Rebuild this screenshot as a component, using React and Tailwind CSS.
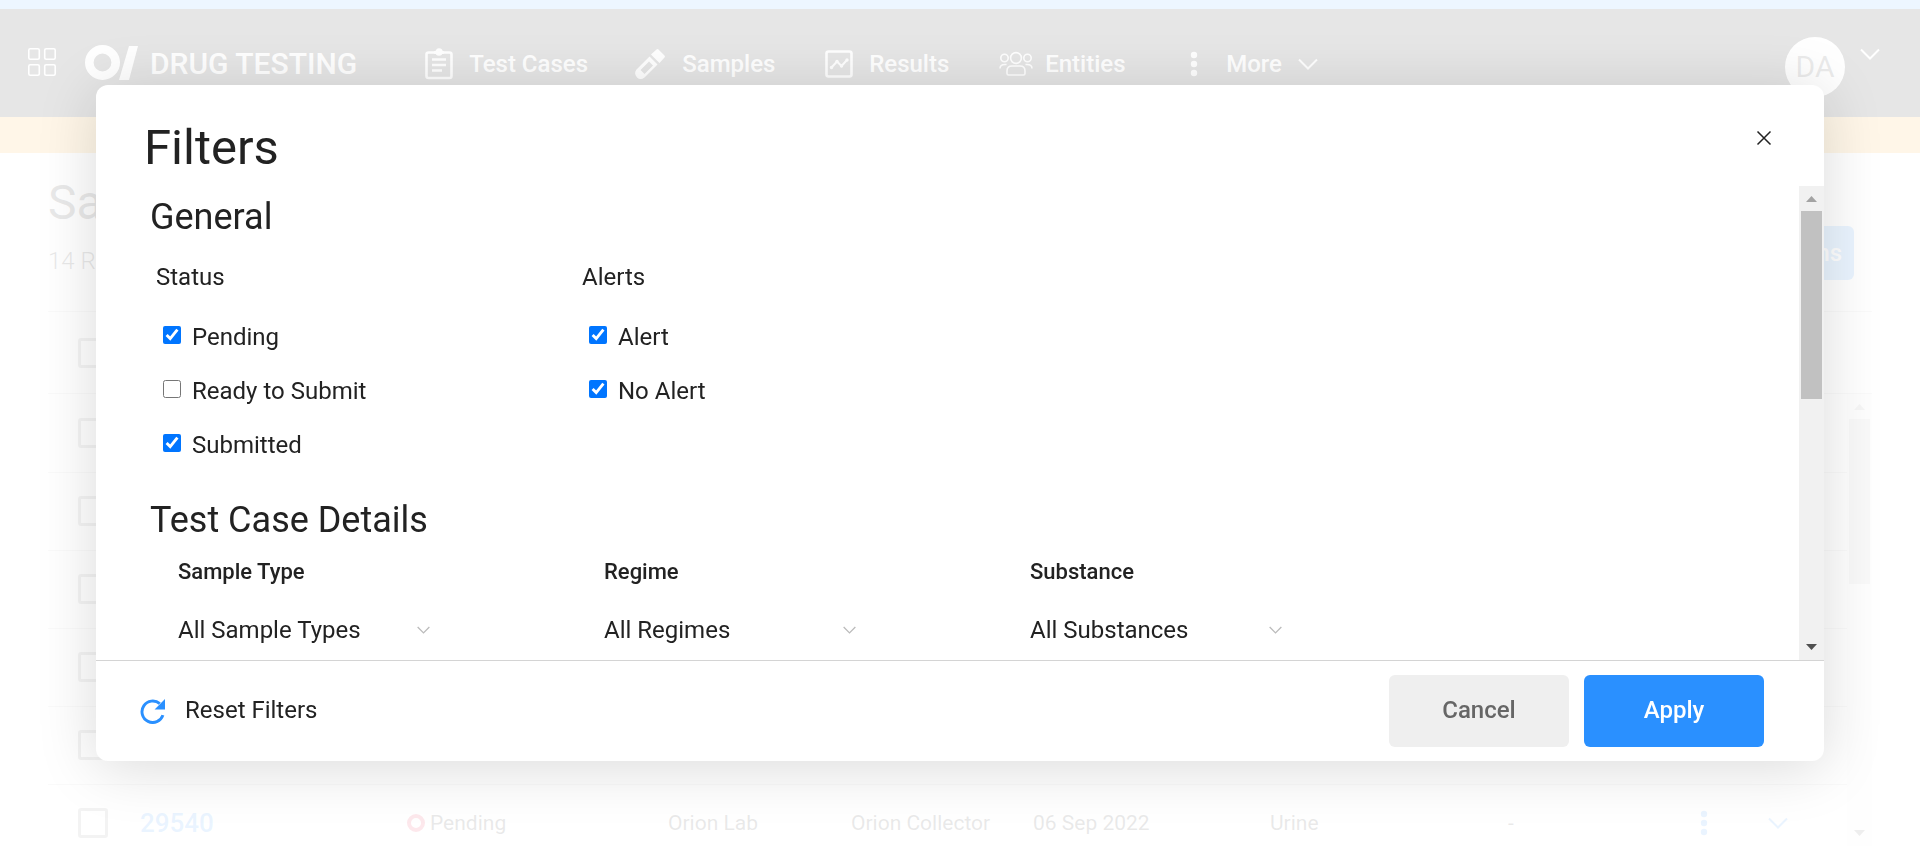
import React from "react";

function Chevron({ className }) {
  return (
    <svg viewBox="0 0 20 12" className={className} fill="none" stroke="currentColor" strokeWidth="2" aria-hidden="true">
      <path d="M1 1.5 L10 10.5 L19 1.5" />
    </svg>
  );
}

function Dots({ className }) {
  return (
    <svg viewBox="0 0 8 26" className={className} fill="currentColor" aria-hidden="true">
      <circle cx="4" cy="4" r="3.2" />
      <circle cx="4" cy="13" r="3.2" />
      <circle cx="4" cy="22" r="3.2" />
    </svg>
  );
}

function GridIcon() {
  return (
    <svg width="28" height="28" viewBox="0 0 28 28" fill="none" stroke="currentColor" strokeWidth="1.6" aria-hidden="true">
      <rect x="0.800" y="0.800" width="10.5" height="10.5" rx="1.5" />
      <rect x="16.700" y="0.800" width="10.5" height="10.5" rx="1.5" />
      <rect x="0.800" y="16.700" width="10.5" height="10.5" rx="1.5" />
      <rect x="16.700" y="16.700" width="10.5" height="10.5" rx="1.5" />
    </svg>
  );
}

function Logo() {
  return (
    <svg width="54" height="36" viewBox="0 0 54 36" fill="currentColor" aria-hidden="true">
      <circle cx="17.5" cy="17.5" r="13.2" fill="none" stroke="currentColor" strokeWidth="8.6" />
      <path d="M44 1 H53 L44 35 H34 Z" />
    </svg>
  );
}

function ClipboardIcon() {
  return (
    <svg width="28" height="32" viewBox="0 0 28 32" fill="none" stroke="currentColor" strokeWidth="2.6" aria-hidden="true">
      <rect x="1.5" y="4.5" width="25" height="25.5" rx="2" />
      <path d="M7 11.5 H21 M7 17 H21 M7 22.5 H17" />
      <path d="M9 4.5 H19" />
      <circle cx="14" cy="4" r="2.4" />
    </svg>
  );
}

function TubeIcon() {
  return (
    <svg width="32" height="32" viewBox="0 0 32 32" fill="currentColor" aria-hidden="true">
      <path
        fillRule="evenodd"
        d="M15.500 8.500 L23.500 16.500 L10.500 29.500 Q6.500 32.500 3 29.500 Q-0.500 25.500 2.500 21.500 Z M15 13.500 L6.500 22 L10.500 26 L19 17.500 Z"
      />
      <path d="M22.500 1.500 Q23.500 0.500 24.500 1.500 L30.500 7.500 Q31.500 8.500 30.500 9.500 L25.500 15 L17 6.500 Z" />
    </svg>
  );
}

function ChartIcon() {
  return (
    <svg width="28" height="28" viewBox="0 0 28 28" fill="none" stroke="currentColor" strokeWidth="2.6" aria-hidden="true">
      <rect x="1.500" y="1.500" width="25" height="25" rx="2" />
      <path d="M6.500 17.500 L12 11.500 L16.500 16 L22 10" strokeWidth="2" />
      <g fill="currentColor" stroke="none">
        <circle cx="6.500" cy="17.500" r="1.700" />
        <circle cx="12" cy="11.500" r="1.700" />
        <circle cx="16.500" cy="16" r="1.700" />
        <circle cx="22" cy="10" r="1.700" />
      </g>
    </svg>
  );
}

function PeopleIcon() {
  return (
    <svg width="34" height="26" viewBox="0 0 34 26" fill="none" stroke="currentColor" strokeWidth="1.6" aria-hidden="true">
      <circle cx="17" cy="7" r="5.400" />
      <circle cx="5.500" cy="7" r="3.700" />
      <circle cx="28.500" cy="7" r="3.700" />
      <path d="M8 22.500 V20 Q8 15 13 15 H21 Q26 15 26 20 V22.500 Q26 24 24.500 24 H9.500 Q8 24 8 22.500 Z" />
      <path d="M1 17.500 Q1 13.500 6 13.500 H7.500 M33 17.500 Q33 13.500 28 13.500 H26.500" />
    </svg>
  );
}

const NAV = [
  { label: "Test Cases", Icon: ClipboardIcon, cls: "w-[209px] gap-4" },
  { label: "Samples", Icon: TubeIcon, cls: "w-[191px] gap-4" },
  { label: "Results", Icon: ChartIcon, cls: "w-[174px] gap-4" },
  { label: "Entities", Icon: PeopleIcon, cls: "w-[191px] gap-3" },
];

function Header() {
  return (
    <header className="flex h-[108px] items-start bg-black pr-10 pl-7 text-white">
      <div className="flex h-[108px] items-start pt-9">
        <button aria-label="Apps" className="mt-[3px] mr-[29px]"><GridIcon /></button>
        <Logo />
        <span className="ml-[11px] text-[30px] leading-[38px] font-medium">DRUG TESTING</span>
      </div>
      <nav className="ml-[68px] flex pt-9">
        {NAV.map(({ label, Icon, cls }) => (
          <a key={label} href="#" className={"flex h-[38px] items-center text-2xl font-medium " + cls}>
            <Icon />
            {label}
          </a>
        ))}
        <a href="#" className="flex h-[38px] items-center text-2xl font-medium">
          <Dots className="mr-7 h-[26px] w-2" />
          More
          <Chevron className="ml-4 h-3 w-5" />
        </a>
      </nav>
      <button className="ml-auto flex items-start gap-[15px] pt-7">
        <span className="flex size-15 items-center justify-center rounded-full bg-white text-3xl text-[#333]">DA</span>
        <Chevron className="mt-[11px] h-3 w-5" />
      </button>
    </header>
  );
}

function ScrollTrack({ thumb }) {
  return (
    <div className="flex w-[25px] shrink-0 flex-col items-center bg-[#f1f1f1]" aria-hidden="true">
      <svg className="h-[25px] w-[11px] shrink-0" viewBox="0 0 11 25" fill="#a3a3a3"><path d="M0 16 L5.500 10 L11 16 Z" /></svg>
      <div className={"w-[21px] bg-[#c1c1c1] " + thumb} />
      <svg className="mt-auto h-[25px] w-[11px] shrink-0" viewBox="0 0 11 25" fill="#505050"><path d="M0 9 L5.500 15 L11 9 Z" /></svg>
    </div>
  );
}

function RowCheck({ id }) {
  return (
    <input
      type="checkbox"
      aria-label={"Select " + id}
      className="block size-[30px] appearance-none rounded-[3px] border-[3px] border-[#888] bg-white"
    />
  );
}

function SamplesPage() {
  return (
    <div className="flex h-screen flex-col overflow-hidden bg-white text-[#222]">
      <div className="h-[9px] shrink-0 bg-[#4a9eff]" />
      <Header />
      <div className="h-9 shrink-0 bg-[#ffa519]" />
      <main className="flex min-h-0 grow flex-col px-12">
        <div className="flex h-[158px] shrink-0 items-start justify-between pr-[18px]">
          <div>
            <h1 className="pt-[22px] text-5xl leading-[56px]">Samples</h1>
            <p className="pt-3.5 text-2xl font-light">14 Records</p>
          </div>
          <button className="mt-[73px] h-[54px] rounded-md bg-[#2a90ff] px-3 text-2xl font-medium text-white">Actions</button>
        </div>
        <div className="flex h-[83px] shrink-0 items-center border-y border-[#ccc] pl-[30px]">
          <RowCheck id="all samples" />
        </div>
        <div className="flex min-h-0 grow">
          <div className="min-w-0 grow overflow-hidden">
            <table className="w-full table-fixed text-[21px]">
              <colgroup>
                <col className="w-[92px]" />
                <col className="w-[267px]" />
                <col className="w-[261px]" />
                <col className="w-[183px]" />
                <col className="w-[182px]" />
                <col className="w-[237px]" />
                <col className="w-[238px]" />
                <col className="w-[192px]" />
                <col />
              </colgroup>
              <tbody>
                {[29545, 29544, 29543, 29542, 29541].map((id) => (
                  <tr key={id} className="h-[78px] border-b border-[#ccc]">
                    <td className="pl-[30px]"><RowCheck id={id} /></td>
                    <td colSpan={8} />
                  </tr>
                ))}
                <tr className="h-[78px]">
                  <td className="pl-[30px]"><RowCheck id={29540} /></td>
                  <td><a href="#" className="text-[26px] font-medium text-[#2a90ff]">29540</a></td>
                  <td>
                    <span className="flex items-center gap-[5px]">
                      <span className="size-[18px] rounded-full border-4 border-[#e8173f]" />
                      Pending
                    </span>
                  </td>
                  <td>Orion Lab</td>
                  <td>Orion Collector</td>
                  <td>06 Sep 2022</td>
                  <td>Urine</td>
                  <td>-</td>
                  <td>
                    <span className="flex items-center gap-[60px] text-[#2a90ff]">
                      <button aria-label="Row menu"><Dots className="h-[26px] w-2" /></button>
                      <button aria-label="Expand row"><Chevron className="h-3 w-5" /></button>
                    </span>
                  </td>
                </tr>
              </tbody>
            </table>
          </div>
          <ScrollTrack thumb="h-[165px]" />
        </div>
      </main>
    </div>
  );
}

function CheckGroup({ title, options }) {
  return (
    <fieldset>
      <legend className="text-2xl leading-8">{title}</legend>
      <div className="mt-7 flex flex-col gap-[22px] pl-[7px]">
        {options.map(([label, checked]) => (
          <label key={label} className="flex h-8 items-start gap-[11px] text-2xl">
            <input type="checkbox" defaultChecked={checked} className="mt-[5px] size-[18px] accent-[#0075ff]" />
            {label}
          </label>
        ))}
      </div>
    </fieldset>
  );
}

function SelectField({ id, label, value }) {
  return (
    <div className="flex flex-col">
      <label htmlFor={id} className="text-[22px] leading-7 font-medium">{label}</label>
      <div className="mt-7 grid w-[252px] items-center">
        <select id={id} className="col-start-1 row-start-1 h-8 appearance-none text-2xl leading-8">
          <option>{value}</option>
        </select>
        <Chevron className="pointer-events-none col-start-1 row-start-1 h-2 w-[13px] justify-self-end text-[#bbb]" />
      </div>
    </div>
  );
}

function FiltersDialog() {
  return (
    <div
      role="dialog"
      aria-label="Filters"
      className="flex h-[80vh] w-[90vw] flex-col overflow-hidden rounded-xl bg-white text-[#222] shadow-[0_6px_60px_rgba(0,0,0,0.15)]"
    >
      <div className="flex h-[101px] shrink-0 items-start justify-between pr-[52px] pl-12">
        <h2 className="pt-[35px] text-[49px] leading-[56px]">Filters</h2>
        <button aria-label="Close" className="mt-[45px]">
          <svg width="16" height="16" viewBox="0 0 16 16" stroke="currentColor" strokeWidth="1.5" aria-hidden="true">
            <path d="M1.500 1.500 L14.500 14.500 M14.500 1.500 L1.500 14.500" />
          </svg>
        </button>
      </div>
      <div className="flex min-h-0 grow">
        <div className="min-w-0 grow overflow-hidden pl-[54px]">
          <h3 className="pt-[9px] text-4xl leading-[44px]">General</h3>
          <div className="mt-[22px] grid grid-cols-[repeat(auto-fill,426px)] pl-1.5">
            <CheckGroup title="Status" options={[["Pending", true], ["Ready to Submit", false], ["Submitted", true]]} />
            <CheckGroup title="Alerts" options={[["Alert", true], ["No Alert", true]]} />
          </div>
          <h3 className="mt-[37px] text-4xl leading-[44px]">Test Case Details</h3>
          <div className="mt-4 grid grid-cols-[repeat(auto-fill,426px)] pl-7">
            <SelectField id="sample-type" label="Sample Type" value="All Sample Types" />
            <SelectField id="regime" label="Regime" value="All Regimes" />
            <SelectField id="substance" label="Substance" value="All Substances" />
          </div>
        </div>
        <ScrollTrack thumb="h-[188px]" />
      </div>
      <div className="flex h-[101px] shrink-0 items-center justify-between border-t border-[#d4d4d4] pr-[60px] pl-11">
        <button className="flex items-center gap-5 text-2xl">
          <svg width="25" height="25" viewBox="0 0 24 24" aria-hidden="true">
            <path d="M22 15.500 A10.300 10.300 0 1 1 19 4.500" fill="none" stroke="#2a90ff" strokeWidth="2.800" />
            <path d="M24 0 V10 H14 Z" fill="#2a90ff" />
          </svg>
          <span className="pb-[3px]">Reset Filters</span>
        </button>
        <div className="flex gap-[15px] text-2xl font-medium">
          <button className="h-[72px] w-[180px] rounded-md bg-[#efefef] pb-[3px] text-[#666]">Cancel</button>
          <button className="h-[72px] w-[180px] rounded-md bg-[#2a90ff] pb-[3px] text-white">Apply</button>
        </div>
      </div>
    </div>
  );
}

export default function App() {
  return (
    <div className="font-[Roboto,sans-serif]">
      <SamplesPage />
      <div className="fixed inset-0 flex items-center justify-center bg-white/90">
        <FiltersDialog />
      </div>
    </div>
  );
}
